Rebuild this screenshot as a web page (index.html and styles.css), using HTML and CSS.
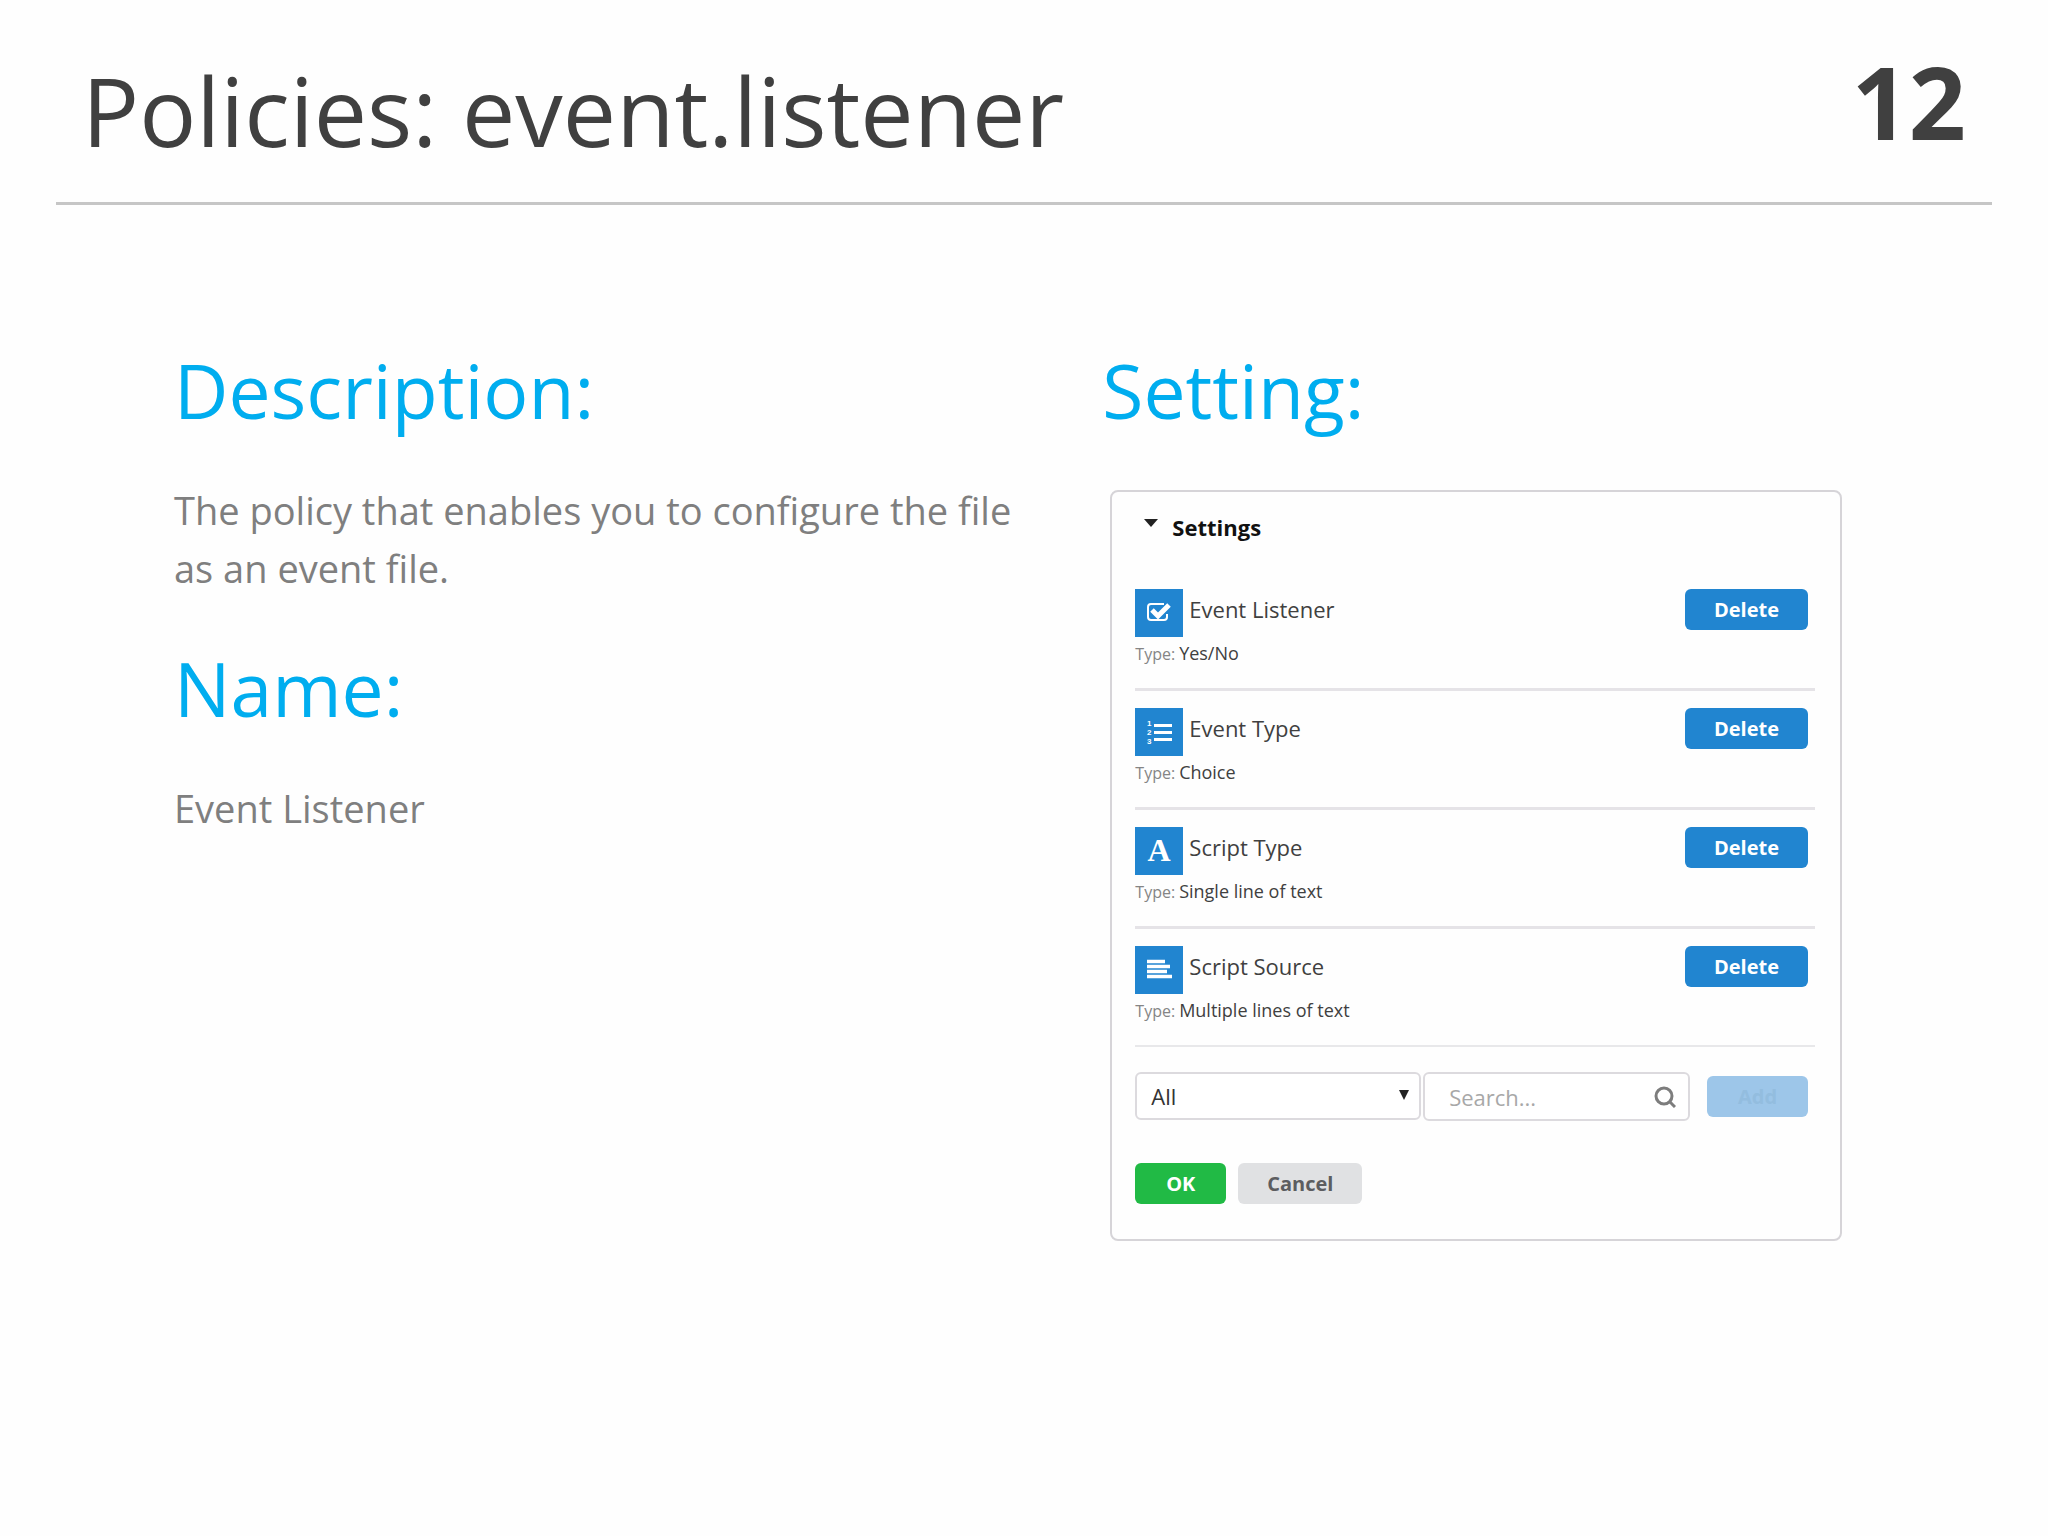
FILE: index.html
```html
<!DOCTYPE html>
<html lang="en">

<head>
    <meta charset="UTF-8">
    <meta name="viewport" content="width=device-width, initial-scale=1.0">
    <title>Policies: event.listener</title>
    <link rel="stylesheet" href="styles.css">
</head>

<body>
    <header class="slide-header">
        <h1>Policies: event.listener</h1>
        <span class="page-number">12</span>
    </header>

    <main class="slide-content">
        <section>
            <h2>Description:</h2>
            <p>The policy that enables you to configure the file as an event file.</p>
            <h2>Name:</h2>
            <p>Event Listener</p>
        </section>

        <section>
            <h2>Setting:</h2>

            <details class="card" open>
                <summary>
                    <svg class="caret" viewBox="0 0 14 9"><path d="M0 0h14L7 8z" fill="#222"/></svg>
                    Settings
                </summary>

                <ul class="settings">
                    <li class="setting">
                        <div class="setting-main">
                            <svg class="icon" viewBox="0 0 48 48">
                                <path d="M32 25v3a3 3 0 0 1-3 3H16a3 3 0 0 1-3-3V18a3 3 0 0 1 3-3H29" fill="none" stroke="#fff" stroke-width="2"/>
                                <path d="M17 21l6 6L34 16" fill="none" stroke="#fff" stroke-width="5"/>
                            </svg>
                            <span class="setting-name">Event Listener</span>
                            <button type="button" class="btn btn-blue">Delete</button>
                        </div>
                        <div class="setting-type">Type: <span>Yes/No</span></div>
                    </li>
                    <li class="setting">
                        <div class="setting-main">
                            <svg class="icon" viewBox="0 0 48 48">
                                <path d="M19 17.500h18M19 24.500h18M19 31.500h18" stroke="#fff" stroke-width="3"/>
                                <g class="icon-digits">
                                    <text x="12" y="18">1</text>
                                    <text x="12" y="27">2</text>
                                    <text x="12" y="36">3</text>
                                </g>
                            </svg>
                            <span class="setting-name">Event Type</span>
                            <button type="button" class="btn btn-blue">Delete</button>
                        </div>
                        <div class="setting-type">Type: <span>Choice</span></div>
                    </li>
                    <li class="setting">
                        <div class="setting-main">
                            <svg class="icon" viewBox="0 0 48 48">
                                <text class="icon-letter" x="24" y="34">A</text>
                            </svg>
                            <span class="setting-name">Script Type</span>
                            <button type="button" class="btn btn-blue">Delete</button>
                        </div>
                        <div class="setting-type">Type: <span>Single line of text</span></div>
                    </li>
                    <li class="setting">
                        <div class="setting-main">
                            <svg class="icon" viewBox="0 0 48 48">
                                <path d="M12 15.500h18M12 20.500h23M12 25.500h20M12 30.500h25" stroke="#fff" stroke-width="3.500"/>
                            </svg>
                            <span class="setting-name">Script Source</span>
                            <button type="button" class="btn btn-blue">Delete</button>
                        </div>
                        <div class="setting-type">Type: <span>Multiple lines of text</span></div>
                    </li>
                </ul>

                <div class="add-row">
                    <div class="select-box">
                        <select aria-label="Setting type">
                            <option>All</option>
                        </select>
                        <svg class="select-arrow" viewBox="0 0 10 10"><path d="M0 0h10L5 10z" fill="#222"/></svg>
                    </div>
                    <div class="search-box">
                        <input type="text" placeholder="Search..." aria-label="Search">
                        <svg class="search-icon" viewBox="0 0 22 22">
                            <circle cx="10" cy="10" r="8" fill="none" stroke="#7d7d7d" stroke-width="3"/>
                            <path d="M15.500 15.500L21 21" stroke="#7d7d7d" stroke-width="3"/>
                        </svg>
                    </div>
                    <button type="button" class="btn btn-add" disabled>Add</button>
                </div>

                <div class="actions">
                    <button type="button" class="btn btn-ok">OK</button>
                    <button type="button" class="btn btn-cancel">Cancel</button>
                </div>
            </details>
        </section>
    </main>
</body>

</html>
```
FILE: styles.css
```css
* {
    box-sizing: border-box;
}

body {
    margin: 0;
    padding: 0 56px;
    font-family: "Open Sans", "Noto Sans", sans-serif;
    background-color: #fefefe;
    color: #404040;
}

h1,
h2,
p {
    margin: 0;
    font-weight: normal;
}

/* header */
.slide-header {
    display: flex;
    justify-content: space-between;
    align-items: flex-start;
    padding: 40px 26px 22px;
    border-bottom: 3px solid #c6c6c6;
}

h1 {
    font-size: 95px;
    line-height: 140px;
}

.page-number {
    font-size: 100px;
    line-height: 122px;
    font-weight: bold;
}

/* two columns */
.slide-content {
    display: grid;
    grid-template-columns: 27fr 23fr;
    column-gap: 60px;
    padding: 135px 150px 0 118px;
}

h2 {
    font-size: 75px;
    line-height: 100px;
    color: #00adef;
}

p {
    margin: 41px 0;
    font-size: 38px;
    line-height: 58px;
    color: #7f7f7f;
}

/* settings card */
.card {
    margin: 50px 0 0 8px;
    padding: 19px 25px 35px 23px;
    border: 2px solid #d6d4d8;
    border-radius: 8px;
}

summary {
    display: flex;
    align-items: center;
    gap: 14px;
    padding-left: 9px;
    font-size: 22px;
    line-height: 32px;
    font-weight: bold;
    color: #111;
    cursor: pointer;
}

.caret {
    width: 14px;
    height: 9px;
    margin-bottom: 8px;
}

.settings {
    list-style: none;
    margin: 29px 0 0;
    padding: 0;
}

.setting {
    padding: 17px 7px 18px 0;
    border-bottom: 3px solid #e5e3e7;
}

.setting:last-child {
    border-bottom: 2px solid #e8e8ea;
}

.setting-main {
    display: flex;
    align-items: flex-start;
}

.icon {
    width: 48px;
    height: 48px;
    background-color: #2185d0;
}

.icon-digits {
    font-family: "Liberation Sans", sans-serif;
    font-size: 8px;
    font-weight: bold;
    fill: #fff;
}

.icon-letter {
    font-family: "Liberation Serif", serif;
    font-size: 32px;
    font-weight: bold;
    text-anchor: middle;
    fill: #fff;
}

.setting-name {
    flex: 1;
    padding-left: 6px;
    font-size: 22px;
    line-height: 40px;
}

.setting-type {
    display: flex;
    align-items: baseline;
    gap: 4px;
    font-size: 16px;
    line-height: 32px;
    color: #858585;
}

.setting-type span {
    font-size: 18px;
    color: #404040;
}

/* buttons */
.btn {
    height: 41px;
    padding: 0;
    border: none;
    border-radius: 6px;
    font-family: inherit;
    font-size: 20px;
    font-weight: bold;
    cursor: pointer;
}

.btn-blue {
    width: 123px;
    background-color: #2185d0;
    color: #fff;
}

.btn-add {
    width: 101px;
    margin-left: 17px;
    background-color: #9dc6e9;
    color: #93bddf;
    cursor: default;
}

.btn-ok {
    width: 91px;
    background-color: #21ba45;
    color: #fff;
}

.btn-cancel {
    width: 124px;
    background-color: #e0e1e3;
    color: #5c5d60;
}

/* filter and search */
.add-row {
    display: flex;
    padding: 25px 7px 0 0;
    align-items: flex-start;
}

.select-box {
    position: relative;
    flex: 286 1 0;
    min-width: 0;
    margin-right: 2px;
}

select {
    display: block;
    width: 100%;
    height: 48px;
    padding: 0 14px;
    appearance: none;
    border: 2px solid #dcdade;
    border-radius: 6px;
    background-color: #fff;
    font-family: inherit;
    font-size: 22px;
    color: #333;
}

.select-arrow {
    position: absolute;
    top: 18px;
    right: 12px;
    width: 10px;
    height: 10px;
    pointer-events: none;
}

/* the flex share leaves out the 40px of padding and border */
.search-box {
    display: flex;
    flex: 227 1 40px;
    min-width: 0;
    align-items: center;
    height: 49px;
    padding: 0 12px 0 24px;
    border: 2px solid #dcdade;
    border-radius: 6px;
    background-color: #fff;
}

.add-row .btn {
    align-self: center;
}

input {
    flex: 1;
    min-width: 0;
    padding: 0;
    border: none;
    outline: none;
    background: none;
    font-family: inherit;
    font-size: 22px;
}

input::placeholder {
    color: #a8a8a8;
}

.search-icon {
    width: 22px;
    height: 22px;
}

.actions {
    display: flex;
    gap: 12px;
    margin-top: 42px;
}
```
